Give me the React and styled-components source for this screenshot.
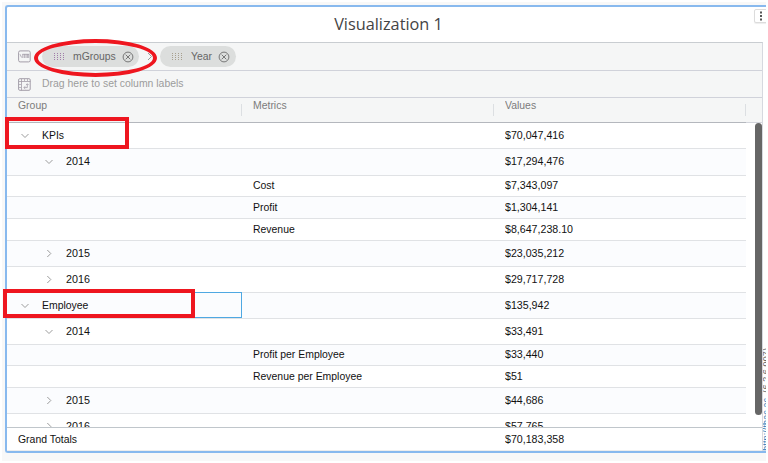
import React from "react";
import styled, { createGlobalStyle, css } from "styled-components";

const GlobalStyle = createGlobalStyle`
  * { box-sizing: border-box; }
  body { margin: 0; background: #fff; overflow: hidden; }
`;

const Page = styled.div`
  width: 768px;
  height: 463px;
  padding: 2px;
  background: #fff;
  font-family: "Liberation Sans", Arial, sans-serif;
  font-size: 11.7px;
  color: #111;
`;

const Backdrop = styled.div`
  height: 459px;
  padding: 3px 0 0 3px;
  background: #f8f8f8;
  overflow: hidden;
`;

const Panel = styled.section`
  position: relative;
  display: flex;
  flex-direction: column;
  height: 448px;
  border: 2px solid #88b9ee;
  border-right: 0;
  border-radius: 3px 0 0 3px;
  background: #fff;
`;

const Title = styled.h1`
  flex: none;
  height: 35px;
  margin: 0;
  padding-left: 4px;
  text-align: center;
  font: 400 16.3px/35px "Open Sans", sans-serif;
  color: #444;
`;

const MenuButton = styled.button`
  position: absolute;
  top: 2px;
  right: -8px;
  width: 20px;
  height: 14px;
  padding: 0 0 0 4px;
  display: flex;
  align-items: center;
  background: #fff;
  border: 1px solid #dcdcdc;
  border-radius: 2px;
  box-shadow: 0 1px 1px #eee;
`;

const Body = styled.div`
  display: flex;
  flex: 1;
  min-height: 0;
`;

const Grid = styled.div`
  display: flex;
  flex-direction: column;
  flex: none;
  width: 756px;
  border-top: 1px solid #c9cdd1;
  border-right: 1px solid #d6d9df;
`;

const Shelf = styled.div`
  flex: none;
  display: flex;
  align-items: center;
  height: ${(p) => p.$height}px;
  padding-left: 11px;
  background: #f5f6f6;
  border-bottom: 1px solid #d0d2da;
`;

/* Condensed text run; $fit is the horizontal scale of the glyphs. */
const Text = styled.span`
  display: inline-block;
  transform: scaleX(${(p) => p.$fit ?? 0.893});
  transform-origin: left center;
  white-space: nowrap;
`;

const Pill = styled.span`
  display: flex;
  align-items: center;
  height: 21px;
  width: ${(p) => p.$width}px;
  margin-left: ${(p) => p.$gap}px;
  padding-left: 12px;
  border-radius: 11px;
  background: #dcdedd;
  color: #666;
  svg:last-child { margin-left: auto; margin-right: ${(p) => p.$end}px; }
`;

const PillLabel = styled(Text)`
  flex: none;
  width: ${(p) => p.$width}px;
  margin-left: 9px;
  padding-bottom: 2px;
`;

const Hint = styled(Text)`
  margin-left: 11px;
  padding-bottom: 3px;
  color: #9c9c9c;
`;

const columns = css`
  display: grid;
  grid-template-columns: 235px 252px 252px;
  width: 739px;
`;

const HeaderBar = styled.div`
  flex: none;
  height: 25px;
  background: #f5f6f6;
  border-bottom: 1px solid #d3d5dc;
`;

const HeaderRow = styled.div`
  ${columns}
  height: 25px;
  border-bottom: 1px solid #b4b7bd;
`;

const HeaderCell = styled.div`
  padding-left: 11px;
  line-height: 13px;
  color: #7c7c7c;
  background: linear-gradient(#dcdfe2, #dcdfe2) right 6px / 1px 12px no-repeat;
`;

const Scroll = styled.div`
  display: flex;
  justify-content: space-between;
  flex: 1;
  min-height: 0;
  overflow: hidden;
`;

const Rows = styled.div`
  width: 739px;
`;

const Row = styled.div`
  ${columns}
  height: ${(p) => p.$height}px;
  border-bottom: 1px solid #e0e2e5;
  &:nth-child(even) { background: #fbfcfe; }
  ${Text} { margin-bottom: 2px; }
`;

const Cell = styled.div`
  display: flex;
  align-items: center;
  padding-left: ${(p) => p.$indent ?? 11}px;
  padding-bottom: 1px;
  ${(p) => p.$selected && css`
    margin: -1px 0 0 -1px;
    padding-bottom: 0;
    border: 1px solid #4fa8e2;
  `}
`;

const RowLabel = styled(Text)`
  margin-left: 12px;
`;

const Thumb = styled.div`
  width: 7px;
  height: 292px;
  border-radius: 4px;
  background: #666;
`;

const Totals = styled.div`
  ${columns}
  flex: none;
  width: 100%;
  height: 24px;
  border-top: 1px solid #c0c6cb;
  border-bottom: 1px solid #ededed;
`;

const SideStatus = styled.div`
  flex: 1;
  min-width: 0;
  overflow: hidden;
  display: flex;
  align-items: flex-end;
`;

const SideText = styled.div`
  flex: none;
  writing-mode: vertical-rl;
  transform: rotate(180deg);
  margin-left: -1px;
  font-size: 9px;
  line-height: 9px;
  letter-spacing: 0.1px;
  white-space: pre;
  color: #666;
  a { color: #2f78b5; }
`;

const Highlight = styled.div`
  position: absolute;
  left: ${(p) => p.$x}px;
  top: ${(p) => p.$y}px;
  width: ${(p) => p.$w}px;
  height: ${(p) => p.$h}px;
  border: 4px solid #ee161f;
  border-radius: ${(p) => (p.$round ? "50%" : 0)};
  pointer-events: none;
`;

const Dots = ({ color }) => (
  <svg width="10" height="7" viewBox="0 0 10 7" fill={color} shapeRendering="crispEdges">
    {[0, 3, 6, 9].map((x) =>
      [0, 2, 4, 6].map((y) => <rect key={x + "-" + y} x={x} y={y} width="1" height="1" />)
    )}
  </svg>
);

const Remove = () => (
  <svg width="12" height="12" viewBox="0 0 12 12" fill="none" stroke="#777">
    <circle cx="6" cy="6" r="4.9" />
    <path d="M3.7 3.7l4.6 4.6M8.3 3.7l-4.6 4.6" />
  </svg>
);

const RowsIcon = () => (
  <svg width="13" height="13" viewBox="0 0 13 13" fill="none" stroke="#a39da8">
    <rect x="0.6" y="0.9" width="11.6" height="11" rx="1.5" />
    <path d="M2 4.2l1.6 3.3M4.8 4v4M6.4 4v4M8 4v4M9.4 4v4M10.7 4v4M4.5 4.3h6.4" strokeWidth="0.8" />
  </svg>
);

const ColumnsIcon = () => (
  <svg width="13" height="13" viewBox="0 0 13 13" fill="none" stroke="#a39da8">
    <rect x="0.6" y="0.7" width="11.6" height="11.6" rx="1.2" />
    <path d="M3.5 1v11.5M1 3.5h11.5" strokeWidth="0.8" />
    <path d="M6.5 1v2M9.5 1v2M1 6.5h2M1 9.5h2" strokeWidth="0.7" />
    <path d="M9.3 6v3.6H6M7.2 8.2L5.8 9.6l1.4 1.3M8 7.1l1.3-1.4 1.4 1.4" strokeWidth="0.8" />
  </svg>
);

const Chevron = ({ open }) => (
  <svg width="9" height="9" viewBox="0 0 9 9" fill="none" stroke="#9c9c9c">
    <path d={open ? "M0.5 3l3.5 3.5L7.5 3" : "M2.3 1l3.5 3.5L2.3 8"} />
  </svg>
);

const Separator = styled.svg`
  flex: none;
  margin-left: 8px;
`;

const rows = [
  { h: 26, label: "KPIs", open: true, value: "$70,047,416" },
  { h: 27, label: "2014", level: 1, open: true, value: "$17,294,476" },
  { h: 21, metric: "Cost", value: "$7,343,097" },
  { h: 22, metric: "Profit", value: "$1,304,141" },
  { h: 22, metric: "Revenue", value: "$8,647,238.10" },
  { h: 26, label: "2015", level: 1, value: "$23,035,212" },
  { h: 26, label: "2016", level: 1, value: "$29,717,728" },
  { h: 26, label: "Employee", open: true, selected: true, value: "$135,942" },
  { h: 26, label: "2014", level: 1, open: true, value: "$33,491" },
  { h: 21, metric: "Profit per Employee", value: "$33,440" },
  { h: 22, metric: "Revenue per Employee", value: "$51" },
  { h: 26, label: "2015", level: 1, value: "$44,686" },
  { h: 26, label: "2016", level: 1, value: "$57,765" },
];

const DataRow = ({ row }) => (
  <Row $height={row.h}>
    <Cell $indent={row.level ? 38 : 14} $selected={row.selected}>
      {row.label && (
        <>
          <Chevron open={row.open} />
          <RowLabel $fit={row.level ? 0.92 : 0.893}>{row.label}</RowLabel>
        </>
      )}
    </Cell>
    <Cell>
      <Text>{row.metric}</Text>
    </Cell>
    <Cell>
      <Text $fit={0.91}>{row.value}</Text>
    </Cell>
  </Row>
);

export default function App() {
  return (
    <Page>
      <GlobalStyle />
      <Backdrop>
        <Panel>
          <Title>Visualization 1</Title>
          <Body>
            <Grid>
              <Shelf $height={28}>
                <RowsIcon />
                <Pill $width={97} $gap={11} $end={5}>
                  <Dots color="#a07da8" />
                  <PillLabel $width={46} $fit={0.89}>mGroups</PillLabel>
                  <Remove />
                </Pill>
                <Separator width="6" height="9" viewBox="0 0 6 9" fill="none" stroke="#999">
                  <path d="M1 1l3.5 3.5L1 8" />
                </Separator>
                <Pill $width={76} $gap={7} $end={6}>
                  <Dots color="#a8a08e" />
                  <PillLabel $width={24} $fit={0.89}>Year</PillLabel>
                  <Remove />
                </Pill>
              </Shelf>
              <Shelf $height={27}>
                <ColumnsIcon />
                <Hint>Drag here to set column labels</Hint>
              </Shelf>
              <HeaderBar>
                <HeaderRow>
                  <HeaderCell><Text>Group</Text></HeaderCell>
                  <HeaderCell><Text>Metrics</Text></HeaderCell>
                  <HeaderCell><Text>Values</Text></HeaderCell>
                </HeaderRow>
              </HeaderBar>
              <Scroll>
                <Rows>
                  {rows.map((row, i) => (
                    <DataRow key={i} row={row} />
                  ))}
                </Rows>
                <Thumb />
              </Scroll>
              <Totals>
                <Cell><Text>Grand Totals</Text></Cell>
                <Cell />
                <Cell><Text $fit={0.91}>$70,183,358</Text></Cell>
              </Totals>
            </Grid>
            <SideStatus>
              <SideText>
                <a>http://tbac.ac</a>{"  (6.2.6.007)"}
              </SideText>
            </SideStatus>
          </Body>
          <MenuButton aria-label="Menu">
            <svg width="4" height="10" viewBox="0 0 4 10" fill="#555">
              <rect x="1" y="0.5" width="2" height="2" />
              <rect x="1" y="4" width="2" height="2" />
              <rect x="1" y="7.5" width="2" height="2" />
            </svg>
          </MenuButton>
          <Highlight $x={27} $y={32} $w={123} $h={38} $round />
          <Highlight $x={-2} $y={110} $w={124} $h={32} />
          <Highlight $x={-4} $y={282} $w={192} $h={29} />
        </Panel>
      </Backdrop>
    </Page>
  );
}
